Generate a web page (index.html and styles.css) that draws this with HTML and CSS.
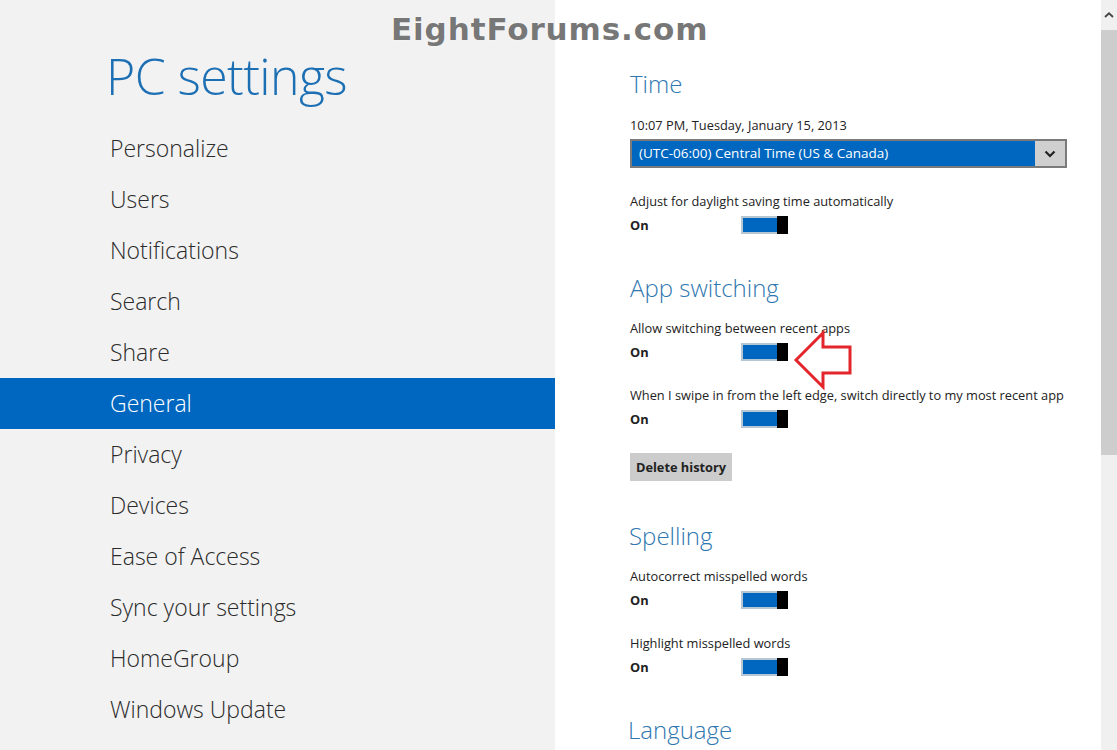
FILE: index.html
```html
<!DOCTYPE html>
<html>
<head>
<meta charset="utf-8">
<link rel="stylesheet" href="styles.css">
</head>
<body>
<div class="screen">
  <aside class="side">
    <div class="title-wrap"><h1 class="title">PC settings</h1></div>
    <nav class="nav">
      <div class="nav-item">Personalize</div>
      <div class="nav-item">Users</div>
      <div class="nav-item">Notifications</div>
      <div class="nav-item">Search</div>
      <div class="nav-item">Share</div>
      <div class="nav-item active">General</div>
      <div class="nav-item">Privacy</div>
      <div class="nav-item">Devices</div>
      <div class="nav-item">Ease of Access</div>
      <div class="nav-item">Sync your settings</div>
      <div class="nav-item">HomeGroup</div>
      <div class="nav-item">Windows Update</div>
    </nav>
  </aside>
  <main class="content">
    <h2 class="heading h-time">Time</h2>
    <div class="label date">10:07 PM, Tuesday, January 15, 2013</div>
    <div class="select">
      <span class="select-text">(UTC-06:00) Central Time (US &amp; Canada)</span>
      <span class="select-btn"><svg width="12" height="8" viewBox="0 0 12 8"><path d="M1.5 1.5 L6 6 L10.5 1.5" fill="none" stroke="#222" stroke-width="2.2"/></svg></span>
    </div>
    <div class="label l-first">Adjust for daylight saving time automatically</div>
    <div class="toggle-row"><span class="state">On</span><span class="toggle"><span class="knob"></span></span></div>

    <h2 class="heading h-next">App switching</h2>
    <div class="label l-first">Allow switching between recent apps</div>
    <div class="toggle-row"><span class="state">On</span><span class="toggle"><span class="knob"></span></span></div>
    <div class="label l-next">When I swipe in from the left edge, switch directly to my most recent app</div>
    <div class="toggle-row"><span class="state">On</span><span class="toggle"><span class="knob"></span></span></div>
    <button class="btn">Delete history</button>

    <h2 class="heading h-spell">Spelling</h2>
    <div class="label l-first">Autocorrect misspelled words</div>
    <div class="toggle-row"><span class="state">On</span><span class="toggle"><span class="knob"></span></span></div>
    <div class="label l-next">Highlight misspelled words</div>
    <div class="toggle-row"><span class="state">On</span><span class="toggle"><span class="knob"></span></span></div>

    <h2 class="heading h-next h-lang">Language</h2>
  </main>
  <div class="scrollbar">
    <div class="sb-up"><svg width="10" height="6" viewBox="0 0 10 6"><path d="M1 5 L5 1.3 L9 5" fill="none" stroke="#444" stroke-width="1.8"/></svg></div>
    <div class="sb-thumb"></div>
    <div class="sb-track"></div>
  </div>
  <div class="watermark">EightForums.com</div>
  <svg class="callout" width="64" height="62" viewBox="0 0 64 62">
    <path d="M4 30 L31 3 L31 17 L58 17 L58 43 L31 43 L31 57 Z" fill="#fff" stroke="#e3262c" stroke-width="3" stroke-linejoin="miter"/>
  </svg>
</div>
</body>
</html>
```
FILE: styles.css
```css
* { box-sizing: border-box; }
html, body { margin: 0; padding: 0; }
body {
  width: 1117px;
  height: 750px;
  overflow: hidden;
  font-family: "Open Sans", "Noto Sans", sans-serif;
  background: #fff;
}
.screen {
  position: relative;
  display: flex;
  width: 1117px;
  height: 750px;
}
.side {
  width: 555px;
  flex: none;
  background: #f2f2f2;
}
.title-wrap {
  height: 123px;
  padding: 44px 0 0 106px;
}
.title {
  margin: 0;
  font-weight: 300;
  font-size: 50px;
  line-height: 64px;
  color: #1d6fb4;
  letter-spacing: -0.6px;
}
.nav-item {
  height: 51px;
  line-height: 51px;
  padding-left: 110px;
  font-size: 23px;
  font-weight: 300;
  color: #2b2b2b;
}
.nav-item.active {
  background: #0067c0;
  color: #fff;
}
.content {
  flex: 1;
  padding: 69px 0 0 75px;
}
.heading {
  margin: 0;
  font-weight: 300;
  font-size: 24px;
  line-height: 30px;
  color: #2f77b0;
}
.h-next { margin-top: 36px; }
.h-spell { margin-top: 40px; margin-left: -1px; }
.h-lang { margin-left: -2px; }
.label {
  font-size: 12.8px;
  line-height: 20px;
  color: #222;
}
.date { margin-top: 16px; }
.l-first { margin-top: 15px; }
.l-next { margin-top: 21px; }
.select {
  margin-top: 4px;
  width: 437px;
  height: 29px;
  display: flex;
  border: 2px solid #7a7a7a;
  background: #0067c0;
}
.select-text {
  flex: 1;
  color: #fff;
  font-size: 13.5px;
  line-height: 25px;
  padding-left: 7px;
}
.select-btn {
  width: 30px;
  background: #cfcfcf;
  display: flex;
  align-items: center;
  justify-content: center;
}
.date + .select + .l-first { margin-top: 23px; }
.toggle-row {
  margin-top: 2px;
  height: 24px;
  display: flex;
  align-items: center;
}
.state {
  width: 111px;
  font-size: 12.8px;
  font-weight: 700;
  color: #222;
}
.toggle {
  position: relative;
  width: 47px;
  height: 18px;
  border: 2px solid #b7c6d3;
  background: #0067c0;
}
.knob {
  position: absolute;
  right: -2px;
  top: -2px;
  width: 11px;
  height: 18px;
  background: #000;
}
.btn {
  display: block;
  margin-top: 22px;
  width: 102px;
  height: 28px;
  border: none;
  background: #cccccc;
  font-family: "Open Sans", "Noto Sans", sans-serif;
  font-weight: 700;
  font-size: 12.8px;
  color: #222;
  padding: 0;
}
.scrollbar {
  width: 16px;
  flex: none;
  display: flex;
  flex-direction: column;
  background: #f0f0f0;
}
.sb-up {
  height: 30px;
  display: flex;
  align-items: center;
  justify-content: center;
}
.sb-thumb {
  height: 425px;
  background: #cdcdcd;
}
.sb-track { flex: 1; }
.watermark {
  position: absolute;
  left: 391px;
  top: 10px;
  font-family: "DejaVu Sans", sans-serif;
  font-weight: 700;
  font-size: 31px;
  line-height: 38px;
  color: #777;
  letter-spacing: 0.9px;
  text-shadow: 0 0 2px rgba(255,255,255,0.8);
}
.callout {
  position: absolute;
  left: 792px;
  top: 330px;
}
```
